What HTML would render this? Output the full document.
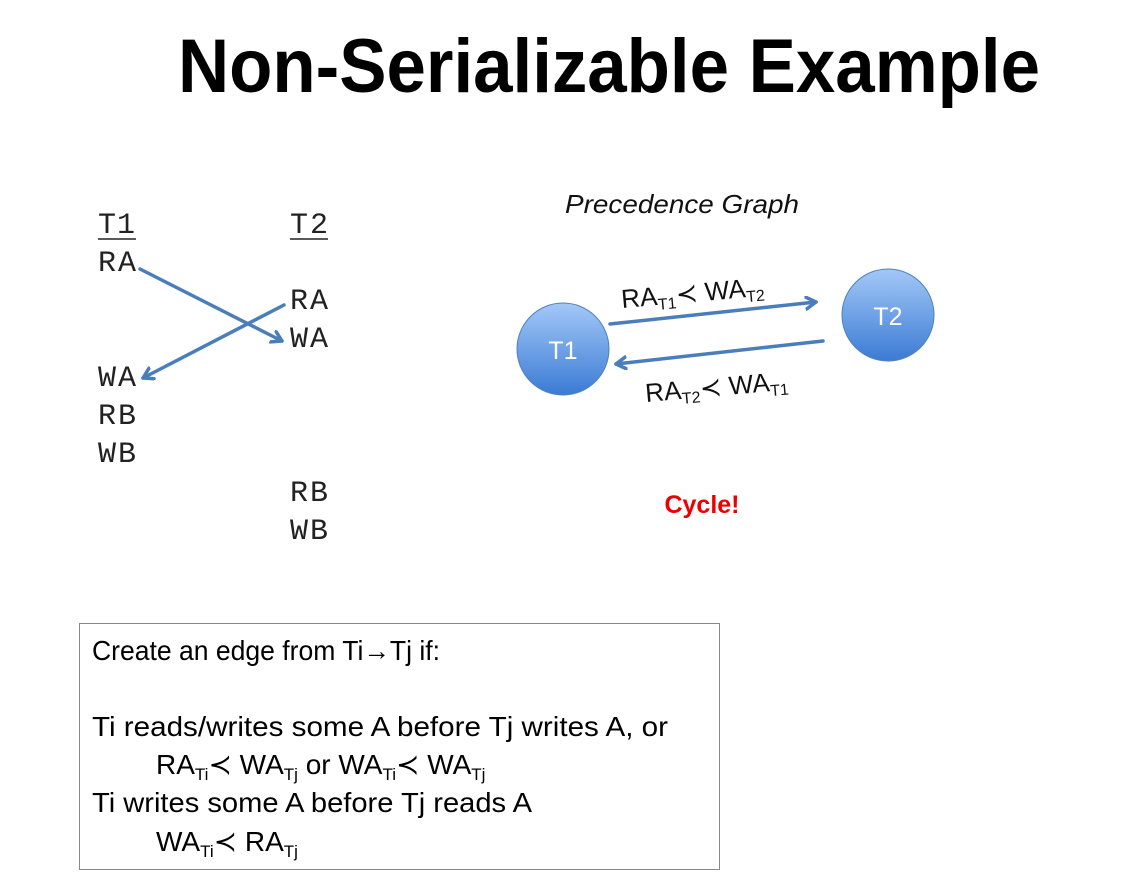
<!DOCTYPE html>
<html><head><meta charset="utf-8"><style>
html,body{margin:0;padding:0;background:#fff;}
svg{display:block}
</style></head><body>
<svg width="1134" height="893" viewBox="0 0 1134 893" xmlns="http://www.w3.org/2000/svg">
<defs>
<linearGradient id="g" x1="0" y1="0" x2="0" y2="1">
<stop offset="0" stop-color="#a3c8f7"/><stop offset="1" stop-color="#3b7bd4"/>
</linearGradient>
<marker id="ah" markerWidth="16" markerHeight="16" refX="11" refY="7" orient="auto" markerUnits="userSpaceOnUse">
<path d="M1,1 L11,7 L1,13" fill="none" stroke="#4a7ebb" stroke-width="3.5" stroke-linecap="round" stroke-linejoin="round"/>
</marker>
</defs>
<text x="178" y="92" font-family="Liberation Sans, sans-serif" font-weight="bold" font-size="76" textLength="862" lengthAdjust="spacingAndGlyphs">Non-Serializable Example</text>

<g font-family="Liberation Mono, monospace" font-size="30" fill="#222">
<text x="98" y="233" textLength="37">T1</text>
<line x1="98" y1="239" x2="136" y2="239" stroke="#222" stroke-width="1.5"/>
<text x="290" y="233" textLength="38">T2</text>
<line x1="290" y1="239" x2="328" y2="239" stroke="#222" stroke-width="1.5"/>
<text x="98" y="271" textLength="38">RA</text>
<text x="290" y="309" textLength="38">RA</text>
<text x="290" y="347" textLength="38">WA</text>
<text x="98" y="386" textLength="38">WA</text>
<text x="98" y="424" textLength="38">RB</text>
<text x="98" y="462" textLength="38">WB</text>
<text x="290" y="501" textLength="38">RB</text>
<text x="290" y="539" textLength="38">WB</text>
</g>
<g stroke="#4a7ebb" stroke-width="3.5" fill="none" stroke-linecap="round">
<line x1="140" y1="269" x2="282" y2="341" marker-end="url(#ah)"/>
<line x1="284" y1="305" x2="143" y2="378" marker-end="url(#ah)"/>
<line x1="610" y1="324" x2="816" y2="302" marker-end="url(#ah)"/>
<line x1="823" y1="341" x2="616" y2="364" marker-end="url(#ah)"/>
</g>

<text x="682" y="213" text-anchor="middle" font-family="Liberation Sans, sans-serif" font-style="italic" font-size="26" textLength="234" lengthAdjust="spacingAndGlyphs" fill="#111">Precedence Graph</text>

<circle cx="563" cy="349" r="46" fill="url(#g)" stroke="#4f81bd" stroke-width="1"/>
<circle cx="888" cy="315" r="46" fill="url(#g)" stroke="#4f81bd" stroke-width="1"/>
<text x="563" y="359" text-anchor="middle" font-family="Liberation Sans, sans-serif" font-size="25" fill="#fff">T1</text>
<text x="888" y="325" text-anchor="middle" font-family="Liberation Sans, sans-serif" font-size="25" fill="#fff">T2</text>

<g font-family="Liberation Sans, sans-serif" fill="#111">
<text transform="translate(622,308) rotate(-5)" font-size="26">RA<tspan font-size="16" dy="5">T1</tspan><tspan dy="-5">≺ WA</tspan><tspan font-size="16" dy="5">T2</tspan></text>
<text transform="translate(646,402) rotate(-5)" font-size="26">RA<tspan font-size="16" dy="5">T2</tspan><tspan dy="-5">≺ WA</tspan><tspan font-size="16" dy="5">T1</tspan></text>
</g>

<text x="702" y="513" text-anchor="middle" font-family="Liberation Sans, sans-serif" font-weight="bold" font-size="25" fill="#ee0000">Cycle!</text>

<rect x="79.5" y="623.5" width="640" height="246" fill="#fff" stroke="#888" stroke-width="1"/>
<g font-family="Liberation Sans, sans-serif" font-size="28" fill="#000">
<text x="92" y="660" textLength="348" lengthAdjust="spacingAndGlyphs">Create an edge from Ti<tspan font-weight="bold">→</tspan>Tj if:</text>
<text x="92" y="736" textLength="576" lengthAdjust="spacingAndGlyphs">Ti reads/writes some A before Tj writes A, or</text>
<text x="156" y="774">RA<tspan font-size="17" dy="6">Ti</tspan><tspan dy="-6">≺ WA</tspan><tspan font-size="17" dy="6">Tj</tspan><tspan dy="-6"> or WA</tspan><tspan font-size="17" dy="6">Ti</tspan><tspan dy="-6">≺ WA</tspan><tspan font-size="17" dy="6">Tj</tspan></text>
<text x="92" y="812" textLength="440" lengthAdjust="spacingAndGlyphs">Ti writes some A before Tj reads A</text>
<text x="156" y="851">WA<tspan font-size="17" dy="6">Ti</tspan><tspan dy="-6">≺ RA</tspan><tspan font-size="17" dy="6">Tj</tspan></text>
</g>
</svg>
</body></html>
